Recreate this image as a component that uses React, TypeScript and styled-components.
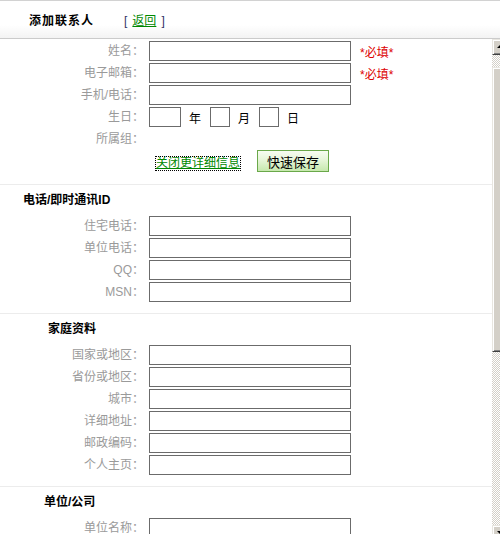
import * as React from 'react';
import styled, { createGlobalStyle, css } from 'styled-components';

const GlobalStyle = createGlobalStyle`
  html, body {
    margin: 0;
    padding: 0;
    background: #fff;
    overflow: hidden;
  }
  body {
    font-family: "Liberation Sans", "Noto Sans CJK SC", sans-serif;
    font-size: 12px;
    color: #000;
  }
`;

const Page = styled.div`
  width: 500px;
  height: 534px;
  display: flex;
  flex-direction: column;
  overflow: hidden;
`;

const Header = styled.div`
  flex-shrink: 0;
  height: 37px;
  display: flex;
  align-items: center;
  padding-left: 29px;
  border-top: 1px solid #d2d2d2;
  border-bottom: 1px solid #cbcbcb;
  background: linear-gradient(to bottom, #fff 65%, #f3f3f3);
`;

const Title = styled.span`
  font-weight: bold;
  letter-spacing: 1px;
`;

const Back = styled.span`
  margin-left: 30px;
  color: #336;
  a {
    margin: 0 5px;
    color: #008800;
    text-decoration: underline;
  }
`;

const Body = styled.div`
  flex: 1;
  display: flex;
  min-height: 0;
`;

const Content = styled.div`
  width: 492px;
  overflow: hidden;
`;

const Section = styled.div<{ $first?: boolean; $bottom: number }>`
  padding-bottom: ${p => p.$bottom}px;
  ${p => p.$first
    ? css`padding-top: 2px;`
    : css`border-top: 1px solid #ececec;`}
`;

const Heading = styled.div<{ $indent: number }>`
  height: 30px;
  line-height: 30px;
  margin-bottom: 1px;
  padding-left: ${p => p.$indent}px;
  font-weight: bold;
`;

const Form = styled.div`
  display: grid;
  grid-template-columns: 144px 202px auto;
  grid-auto-rows: 20px;
  column-gap: 5px;
  row-gap: 2px;
  align-items: center;
`;

const Label = styled.div`
  grid-column: 1;
  line-height: 14px;
  text-align: right;
  color: #9a9a9a;
  white-space: nowrap;
`;

const Field = styled.input<{ $w?: number }>`
  box-sizing: border-box;
  width: ${p => p.$w ?? 202}px;
  height: 20px;
  margin: 0;
  padding: 0 2px;
  border: 1px solid #6b6b6b;
  background: #fff;
  font: inherit;
`;

const Required = styled.span`
  margin-left: 4px;
  color: #dd0000;
  white-space: nowrap;
`;

const DateRow = styled.div`
  grid-column: 2 / span 2;
  display: flex;
  align-items: center;
  gap: 8px;
`;

const Unit = styled.span`
  margin-right: 1px;
`;

const Actions = styled.div`
  margin-top: 1px;
  padding-left: 156px;
  display: flex;
  align-items: center;
`;

const MoreLink = styled.a`
  margin-top: 4px;
  color: #008800;
  text-decoration: underline;
  outline: 1px dotted #000;
  line-height: 13px;
  cursor: pointer;
`;

const SaveButton = styled.button`
  box-sizing: border-box;
  margin-left: 17px;
  width: 72px;
  height: 22px;
  padding: 0;
  border: 1px solid #6aa84a;
  background: linear-gradient(to bottom, #f7fcf2 0%, #e6f5d8 45%, #c6e8ad 100%);
  font: inherit;
  font-size: 13px;
  color: #000;
`;

// classic windows-style scrollbar on the right edge
const Scrollbar = styled.div`
  width: 8px;
  overflow: hidden;
  display: flex;
  flex-direction: column;
`;

const bevel = css`
  box-sizing: border-box;
  width: 16px;
  flex-shrink: 0;
  background: #d4d0c8;
  border-top: 1px solid #e8e6e0;
  border-left: 1px solid #e8e6e0;
  border-right: 1px solid #404040;
  border-bottom: 1px solid #404040;
  box-shadow: inset 1px 1px #fff, inset -1px -1px #808080;
`;

const ArrowButton = styled.div<{ $down?: boolean }>`
  ${bevel}
  height: 16px;
  position: relative;
  &:after {
    content: '';
    position: absolute;
    left: 4px;
    top: ${p => (p.$down ? 5 : 4)}px;
    border-left: 4px solid transparent;
    border-right: 4px solid transparent;
    ${p => p.$down
      ? css`border-top: 4px solid #000;`
      : css`border-bottom: 4px solid #000;`}
  }
`;

const Track = styled.div<{ $h: number }>`
  width: 16px;
  height: ${p => p.$h}px;
  flex-shrink: 0;
  background: repeating-conic-gradient(#d4d0c8 0 25%, #fff 0 50%) 0 0 / 2px 2px;
`;

const Thumb = styled.div<{ $h: number }>`
  ${bevel}
  height: ${p => p.$h}px;
`;

type Row = { label: string; required?: boolean };

const basic: Row[] = [
  { label: '姓名：', required: true },
  { label: '电子邮箱：', required: true },
  { label: '手机/电话：' },
];

const phones: Row[] = [
  { label: '住宅电话：' },
  { label: '单位电话：' },
  { label: 'QQ：' },
  { label: 'MSN：' },
];

const home: Row[] = [
  { label: '国家或地区：' },
  { label: '省份或地区：' },
  { label: '城市：' },
  { label: '详细地址：' },
  { label: '邮政编码：' },
  { label: '个人主页：' },
];

const company: Row[] = [{ label: '单位名称：' }];

const Rows = ({ rows }: { rows: Row[] }) => (
  <>
    {rows.map(r => (
      <React.Fragment key={r.label}>
        <Label>{r.label}</Label>
        <Field type="text" />
        {r.required ? <Required>*必填*</Required> : <span />}
      </React.Fragment>
    ))}
  </>
);

export default function App() {
  return (
    <Page>
      <GlobalStyle />
      <Header>
        <Title>添加联系人</Title>
        <Back>
          [<a href="#">返回</a>]
        </Back>
      </Header>
      <Body>
        <Content>
          <Section $first $bottom={12}>
            <Form>
              <Rows rows={basic} />
              <Label>生日：</Label>
              <DateRow>
                <Field $w={32} />
                <Unit>年</Unit>
                <Field $w={20} />
                <Unit>月</Unit>
                <Field $w={20} />
                <Unit>日</Unit>
              </DateRow>
              <Label>所属组：</Label>
            </Form>
            <Actions>
              <MoreLink>关闭更详细信息</MoreLink>
              <SaveButton>快速保存</SaveButton>
            </Actions>
          </Section>
          <Section $bottom={11}>
            <Heading $indent={23}>电话/即时通讯ID</Heading>
            <Form>
              <Rows rows={phones} />
            </Form>
          </Section>
          <Section $bottom={11}>
            <Heading $indent={48}>家庭资料</Heading>
            <Form>
              <Rows rows={home} />
            </Form>
          </Section>
          <Section $bottom={11}>
            <Heading $indent={44}>单位/公司</Heading>
            <Form>
              <Rows rows={company} />
            </Form>
          </Section>
        </Content>
        <Scrollbar>
          <ArrowButton />
          <Track $h={12} />
          <Thumb $h={285} />
          <Track $h={173} />
          <ArrowButton $down />
        </Scrollbar>
      </Body>
    </Page>
  );
}
